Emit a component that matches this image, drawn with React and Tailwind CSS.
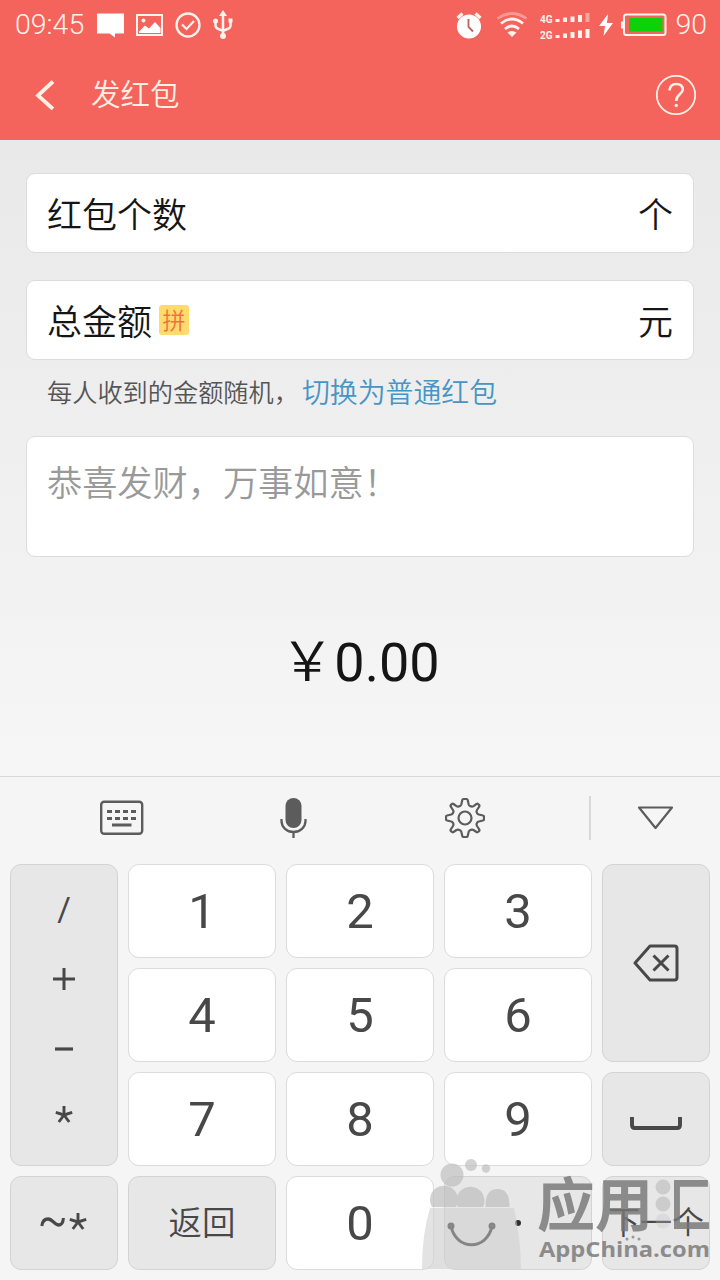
import React from 'react';

const CJK = "font-['Roboto','Noto_Sans_CJK_SC',sans-serif]";

const StatusBar = () => (
  <div className="flex h-[50px] items-center text-[#fff3ec]">
    <span className="ml-[15px] w-[82px] text-[28.500px] leading-none font-light whitespace-nowrap">09:45</span>
    <svg className="w-[28px] h-[26px]" viewBox="0 0 28 26" fill="currentColor">
      <path d="M0 1.500h27v20H18V25.500L12.500 21.500H0z" fill="#fff" />
    </svg>
    <svg className="ml-[10px] w-[28px] h-[24px]" viewBox="0 0 28 24">
      <path d="M2 2h25v20H2z" fill="none" stroke="currentColor" strokeWidth="2" />
      <path d="M4 20v-1.500l6-6 4 3 6-6.500 5.500 6v5z" fill="#fff" />
      <circle cx="8.500" cy="7.500" r="2" fill="currentColor" />
    </svg>
    <svg className="ml-[12px] w-[26px] h-[26px]" viewBox="0 0 26 26" fill="none" stroke="currentColor">
      <circle cx="13" cy="13" r="11.500" strokeWidth="2.300" />
      <path d="M7 12.500l4.500 4.500 7.500-8" strokeWidth="2.200" />
    </svg>
    <svg className="ml-[11px] w-[22px] h-[30px]" viewBox="0 0 22 30">
      <path d="M11 5v20M3.500 12v3.500q0 2.500 3 3.500l4.500 2 4.500-2q3-1 3-3.500V12" fill="none" stroke="currentColor" strokeWidth="2.500" />
      <path d="M11 0l4 6H7z" fill="currentColor" />
      <circle cx="11" cy="26" r="3" fill="currentColor" />
      <circle cx="3.500" cy="11" r="2.500" fill="currentColor" />
      <path d="M16.500 8.500h4v4h-4z" fill="currentColor" />
    </svg>

    <svg className="ml-auto w-[26px] h-[28px]" viewBox="0 0 26 28">
      <circle cx="13" cy="15.500" r="12" fill="#fff" />
      <path d="M1.500 7l5-4.500M24.500 7l-5-4.500" stroke="currentColor" strokeWidth="3.200" />
      <path d="M12.500 8v8l4.500 4.500" stroke="#b8625e" strokeWidth="1.800" fill="none" />
    </svg>
    <svg className="ml-[14px] w-[32px] h-[28px]" viewBox="0 0 32 28" fill="none" stroke="currentColor" strokeWidth="2.700">
      <path d="M1.500 7.500q14.500-10 29 0" opacity=".38" />
      <path d="M5 12.500q11-9 22 0" />
      <path d="M9 18q7-6 14 0" />
      <path d="M11.500 21.500q4.500-3 9 0L16 26z" fill="currentColor" stroke="none" />
    </svg>
    <svg className="ml-[12px] w-[52px] h-[32px]" viewBox="0 0 52 32" fill="currentColor">
      <text x="0" y="13.500" fontSize="11.500" fontWeight="700" textLength="12.500" lengthAdjust="spacingAndGlyphs">4G</text>
      <text x="0" y="29.500" fontSize="11.500" fontWeight="700" textLength="12.500" lengthAdjust="spacingAndGlyphs">2G</text>
      <path d="M15.500 10h4v3h-4zM23 8.500h4V13h-4zM30.500 7.500h4V13h-4zM38 6h4v7h-4z" />
      <path d="M45.500 4h4v9h-4z" opacity=".45" />
      <path d="M15.500 26h4v3h-4zM23 24.500h4V29h-4zM30.500 23h4v6h-4zM38 21.500h4V29h-4zM45.500 20h4v9h-4z" />
    </svg>
    <svg className="ml-[7px] w-[14px] h-[22px]" viewBox="0 0 14 22">
      <path d="M9 0L0 12h6L4.500 22 14 9H8z" fill="#fff" />
    </svg>
    <svg className="ml-[8px] w-[46px] h-[24px]" viewBox="0 0 46 24">
      <path d="M1 8.500v7" stroke="currentColor" strokeWidth="2.500" />
      <rect x="3" y="1.500" width="41.500" height="20.500" rx="2.500" fill="none" stroke="currentColor" strokeWidth="2" />
      <rect x="8" y="5" width="33.500" height="13.500" fill="#0bd308" />
    </svg>
    <span className="ml-[8px] mr-[13px] text-[28.500px] leading-none font-light">90</span>
  </div>
);

const Header = () => (
  <header className="h-[140px] bg-[#f4635c]">
    <StatusBar />
    <div className="flex h-[90px] items-center pl-[35px] pr-[23px] text-[#fff0e4]">
      <svg className="w-[20px] h-[30px]" viewBox="0 0 20 30" fill="none" stroke="currentColor" strokeWidth="3.800">
        <path d="M18 1.500L3 15.500 18 29" />
      </svg>
      <h1 className="ml-[36px] text-[29.500px] leading-[40px] font-[350]">发红包</h1>
      <svg className="ml-auto w-[42px] h-[42px]" viewBox="0 0 42 42" fill="none" stroke="currentColor">
        <circle cx="21" cy="21" r="19.200" strokeWidth="1.800" />
        <path d="M14.500 16.500q.5-6.500 6.800-6.500t6.500 5.500c0 4.500-6.600 5-6.600 11.500" strokeWidth="2.600" />
        <circle cx="21.200" cy="31.500" r="1.700" fill="currentColor" stroke="none" />
      </svg>
    </div>
  </header>
);

const Field = ({ label, unit, tag }) => (
  <div className="flex h-[80px] items-center rounded-[9px] border border-[#dcdcdc] bg-white px-[20px] text-[35px] leading-[50px] font-[350] text-[#151515]">
    <span className="pt-[7px]">{label}</span>
    {tag && (
      <span className="ml-[7px] mb-[1px] flex h-[30px] w-[30px] items-center justify-center rounded-[3px] bg-[#fedb6c] pt-[3px] text-[23px] leading-none text-[#f0713f]">
        {tag}
      </span>
    )}
    <span className="ml-auto pt-[7px]">{unit}</span>
  </div>
);

const Form = () => (
  <main className="h-[636px] bg-linear-to-b from-[#e9e9e9] to-[#f6f6f6] px-[26px] pt-[33px]">
    <Field label="红包个数" unit="个" />
    <div className="mt-[27px]">
      <Field label="总金额" unit="元" tag="拼" />
    </div>
    <p className="flex h-[63px] items-center pt-[4px] pl-[21px] text-[25.200px] font-[350] text-[#555] whitespace-nowrap">
      每人收到的金额随机，
      <a className="ml-[3px] text-[27.900px] text-[#4795c6]">切换为普通红包</a>
    </p>
    <div className="mt-[13px] h-[121px] rounded-[9px] border border-[#dcdcdc] bg-white px-[20px] pt-[22px] text-[35.200px] leading-[50px] font-[350] text-[#999]">
      恭喜发财，万事如意！
    </div>
    <div className="mt-[61px] text-center text-[54px] leading-[80px] text-[#151515]">
      <span className="font-['Noto_Sans_CJK_SC',sans-serif] font-[350]">￥</span>0.00
    </div>
  </main>
);

const Toolbar = () => (
  <div className="flex h-[88px] items-center border-t border-[#d8d8d8] pl-[100px] pr-[46px] pb-[6px] text-[#5c5c5c]">
    <svg className="w-[44px] h-[36px]" viewBox="0 0 44 36" fill="none" stroke="currentColor">
      <rect x="1.200" y="1.700" width="41" height="32" rx="3" strokeWidth="2.400" />
      <path d="M7 11.500h29.500M7 18.500h29.500" strokeWidth="3" strokeDasharray="5 3" />
      <path d="M12 25h19.500" strokeWidth="3" />
    </svg>
    <svg className="ml-[136px] w-[28px] h-[42px]" viewBox="0 0 28 42" fill="none" stroke="currentColor" strokeWidth="2.300">
      <rect x="5.500" y="1" width="16" height="30" rx="8" fill="currentColor" stroke="none" />
      <path d="M1.500 22v2a12 11 0 0 0 24 0v-2M13.500 35v6" />
    </svg>
    <svg className="ml-[137px] w-[40px] h-[42px]" viewBox="1 0 40 42" fill="none" stroke="currentColor" strokeWidth="2.200" strokeLinejoin="round">
      <circle cx="21" cy="21" r="6.500" />
      <path d="M19.500 2h3q1 0 1.200 1l1 4.500q.3 1 1.300 1.500 2 1.200 3.500.2L32.500 7q1-.6 1.800.2l.7.700q.8.800.2 1.800L33 13q-1 1.500.2 3.300.5 1 1.500 1.200l4.300 1q1 .2 1 1.200v2.600q0 1-1 1.200l-4.300 1q-1 .2-1.500 1.200-1.200 1.800-.2 3.300l2.200 3.300q.6 1-.2 1.800l-.7.700q-.8.800-1.800.2L29.500 33q-1.500-1-3.500.2-1 .5-1.300 1.500l-1 4.300q-.2 1-1.200 1h-3q-1 0-1.200-1l-1-4.300q-.3-1-1.300-1.500-2-1.200-3.500-.2L9.500 35q-1 .6-1.800-.2L7 34.100q-.8-.8-.2-1.800L9 29q1-1.500-.2-3.300-.5-1-1.500-1.200l-4.300-1q-1-.2-1-1.200v-2.600q0-1 1-1.200l4.300-1q1-.2 1.500-1.200Q10 14.500 9 13L6.800 9.700q-.6-1 .2-1.800l.7-.7q.8-.8 1.800-.2l3 2.200q1.500 1 3.500-.2 1-.5 1.300-1.500l1-4.500q.2-1 1.200-1z" />
    </svg>
    <div className="ml-auto h-[44px] w-[2px] bg-[#d8d8d8]" />
    <svg className="ml-[46px] w-[37px] h-[24px]" viewBox="0 0 37 24" fill="none" stroke="currentColor" strokeWidth="2.200" strokeLinejoin="round">
      <path d="M2 1.500h33L18.500 22z" />
    </svg>
  </div>
);

const Key = ({ children, dark, className = '' }) => (
  <div
    className={`flex items-center justify-center rounded-[11px] border-[1.500px] ${
      dark ? 'border-[#d3d3d3] bg-[#e7e7e7]' : 'border-[#dcdcdc] bg-white'
    } text-[#484848] ${className}`}
  >
    {children}
  </div>
);

const Num = ({ n }) => <Key className="text-[49px] leading-none">{n}</Key>;

const Star = () => (
  <path d="M9 9V0M9 9L.8 6.300M9 9l8.200-2.700M9 9l-5.200 7M9 9l5.200 7" fill="none" stroke="currentColor" strokeWidth="2.900" />
);

const Keypad = () => (
  <div className="grid grid-cols-[108px_148px_148px_148px_108px] grid-rows-[94px_94px_94px_94px] gap-[10px] px-[10px]">
    <Key dark className="row-span-3 flex-col">
      <span className="h-[70px] text-[33px] leading-[70px]">/</span>
      <svg className="my-[23px] h-[24px] w-[24px]" viewBox="0 0 24 24" stroke="currentColor" strokeWidth="3">
        <path d="M1 11h22M12 0v22" />
      </svg>
      <svg className="my-[23px] h-[24px] w-[20px]" viewBox="0 0 20 24" stroke="currentColor" strokeWidth="3.200">
        <path d="M1 11h18" />
      </svg>
      <svg className="mt-[21px] mb-[31px] h-[18px] w-[18px]" viewBox="0 0 18 18"><Star /></svg>
    </Key>
    <Num n="1" />
    <Num n="2" />
    <Num n="3" />
    <Key dark className="row-span-2">
      <svg className="h-[38px] w-[46px]" viewBox="0 0 46 38" fill="none" stroke="currentColor" strokeWidth="3" strokeLinejoin="round">
        <path d="M17 2h24.500q2.500 0 2.500 2.500v29q0 2.500-2.500 2.500H17L2 19z" />
        <path d="M20.500 11.500l15 15M35.500 11.500l-15 15" />
      </svg>
    </Key>
    <Num n="4" />
    <Num n="5" />
    <Num n="6" />
    <Num n="7" />
    <Num n="8" />
    <Num n="9" />
    <Key dark>
      <svg className="mt-[10px] h-[14px] w-[52px]" viewBox="0 0 52 14" fill="none" stroke="currentColor" strokeWidth="3.900">
        <path d="M2 0v8q0 3 3 3h42q3 0 3-3V0" />
      </svg>
    </Key>
    <Key dark>
      <svg className="h-[20px] w-[48px]" viewBox="0 0 48 20">
        <path d="M2 13q1-7 7-7c5 0 7 6 12 6q4.500 0 5-7" transform="scale(.9 1)" fill="none" stroke="currentColor" strokeWidth="3.400" />
        <g transform="translate(29 0)"><Star /></g>
      </svg>
    </Key>
    <Key dark className="pt-[3px] text-[33.500px] font-[350]">返回</Key>
    <Num n="0" />
    <Key dark>
      <span className="h-[6px] w-[6px] rounded-full bg-[#303030]" />
    </Key>
    <Key dark className="text-[32px] font-[350] whitespace-nowrap">下一个</Key>
  </div>
);

const Watermark = () => (
  <svg className="absolute left-[420px] top-[1156px] h-[124px] w-[300px]" viewBox="0 0 300 124">
    <g fill="#bcbcbc" opacity=".65">
      <circle cx="51" cy="9" r="6" />
      <circle cx="66" cy="12.500" r="4.200" />
      <circle cx="32" cy="19" r="11.500" />
      <path d="M12 51a14 14 0 1 1 24 0zM38 51a14 14 0 1 1 25 0zM65.500 51q-.5-18 12-18t12 18z" />
    </g>
    <path d="M10 52h84q7 32 7 61H2q0-35 8-61z" fill="#d0d0d0" opacity=".6" />
    <g fill="none" stroke="#858585" strokeWidth="3">
      <path d="M31 70c5 25 36 25 41 0" />
      <circle cx="31" cy="70" r="2" />
      <circle cx="72" cy="70" r="2" />
    </g>
    <defs>
      <linearGradient id="fade" gradientUnits="userSpaceOnUse" x1="233" x2="291" y1="0" y2="0">
        <stop offset=".36" stopColor="#777" stopOpacity="0" />
        <stop offset=".37" stopColor="#777" />
      </linearGradient>
    </defs>
    <g fill="#777" opacity=".82" fontWeight="700">
      <text x="117" y="70" fontSize="58" fontFamily="Noto Sans CJK SC, sans-serif">应用</text>
      <text x="233" y="70" fontSize="58" fontFamily="Noto Sans CJK SC, sans-serif" fill="url(#fade)">汇</text>
      <text x="119" y="101" fontSize="22" fontFamily="Open Sans, sans-serif" textLength="171" lengthAdjust="spacingAndGlyphs">AppChina.com</text>
    </g>
    <g fill="#c4c4c4" opacity=".75">
      <circle cx="243" cy="31" r="7.500" />
      <circle cx="243" cy="48" r="7.500" />
      <circle cx="243" cy="65" r="7.500" opacity=".4" />
    </g>
    <g fill="#999">
      <circle cx="207" cy="83" r="1.500" />
      <circle cx="213" cy="81" r="1.500" />
      <circle cx="219" cy="83" r="1.500" />
    </g>
  </svg>
);

const App = () => {
  return (
    <div className={`relative h-[1280px] w-[720px] overflow-hidden bg-[#f5f5f5] ${CJK}`}>
      <Header />
      <Form />
      <section className="bg-[#f5f5f5]">
        <Toolbar />
        <Keypad />
      </section>
      <Watermark />
    </div>
  );
};

export default App;
